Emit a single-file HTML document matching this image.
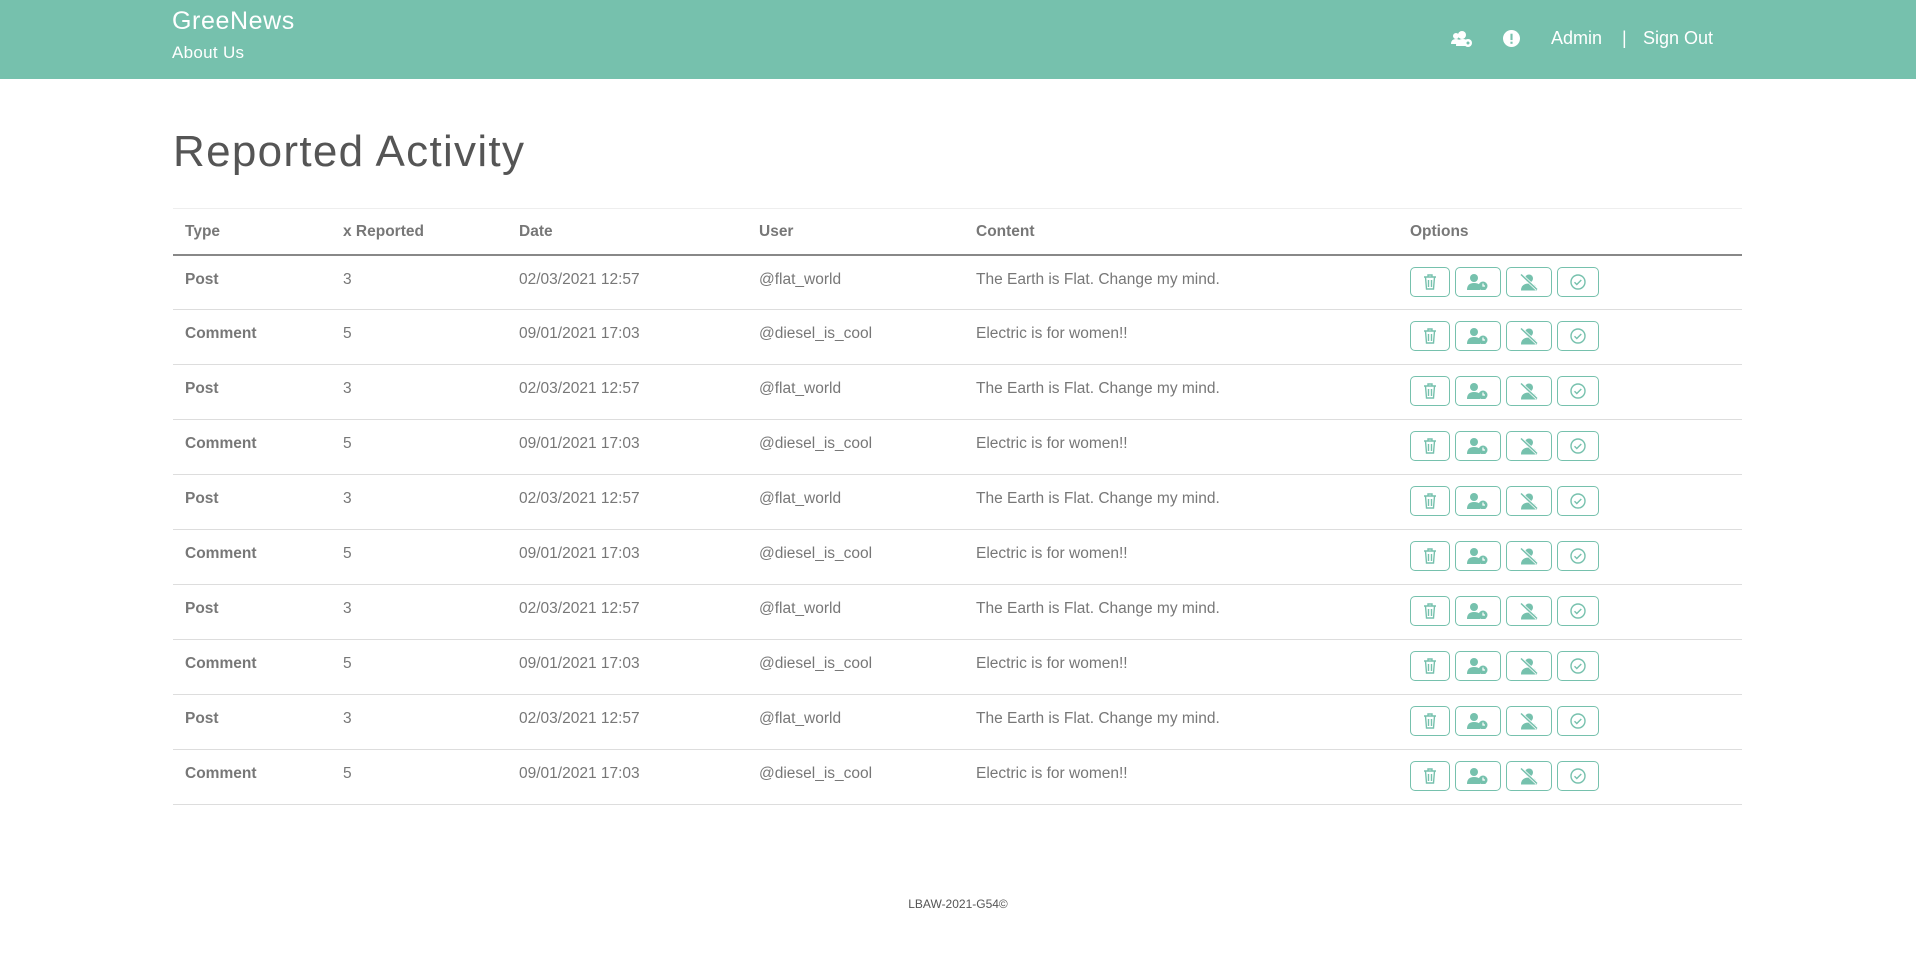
<!DOCTYPE html>
<html><head><meta charset="utf-8"><style>
*{box-sizing:border-box;margin:0;padding:0}
body{width:1916px;height:969px;background:#fff;font-family:"Liberation Sans",sans-serif;color:#777;overflow:hidden;position:relative}
.nav{position:absolute;left:0;top:0;width:1916px;height:79px;background:#76c1ad;color:#fff}
.brand{position:absolute;left:172px;top:7px;font-size:25px;letter-spacing:0.6px}
.about{position:absolute;left:172px;top:43px;font-size:17px;letter-spacing:0.3px}
.right{position:absolute;top:28px;font-size:18px}
h1{position:absolute;left:173px;top:127px;font-size:44px;font-weight:normal;color:#555;letter-spacing:1.3px}
table{position:absolute;left:173px;top:208px;width:1569px;border-collapse:collapse;font-size:15.5px;border-top:1px solid #eee}
th{text-align:left;font-weight:bold;color:#777;height:46px;border-bottom:2px solid #888;padding-left:12px;padding-top:2px}
td{height:55px;border-bottom:1px solid #ddd;padding-left:12px;vertical-align:top;padding-top:15px}
td.b{font-weight:bold}
.btn{display:inline-block;height:30px;border:1.5px solid #76c1ad;border-radius:5px;margin-right:5px;vertical-align:top;position:relative;margin-top:-4px}
.btn svg{position:absolute;left:50%;top:50%;transform:translate(-50%,-50%)}
.foot{position:absolute;left:0;width:1916px;top:897px;text-align:center;font-size:12px;color:#555}
</style></head><body>
<div class="nav">
<div class="brand">GreeNews</div>
<div class="about">About Us</div>
<svg class="right" style="left:1451px;top:31px" width="22" height="16" viewBox="0 0 22 16" fill="#fff"><circle cx="5" cy="5" r="3"/><circle cx="11" cy="4" r="4"/><path d="M0 13q0-5 5-5 5 0 5 5z"/><path d="M5 15q0-7 7-7 4 0 5 3v4z"/><circle cx="17" cy="12" r="4"/><circle cx="17" cy="12" r="1.5" fill="#76c1ad"/></svg>
<svg class="right" style="left:1503px;top:30px" width="17" height="17" viewBox="0 0 16 16"><circle cx="8" cy="8" r="8" fill="#fff"/><rect x="7" y="3.5" width="2" height="6" fill="#76c1ad"/><rect x="7" y="11" width="2" height="2" fill="#76c1ad"/></svg>
<div class="right" style="left:1551px">Admin</div>
<div class="right" style="left:1622px">|</div>
<div class="right" style="left:1643px">Sign Out</div>
</div>
<h1>Reported Activity</h1>
<table>
<colgroup><col style="width:158px"><col style="width:176px"><col style="width:240px"><col style="width:217px"><col style="width:434px"><col></colgroup>
<tr><th>Type</th><th>x Reported</th><th>Date</th><th>User</th><th>Content</th><th>Options</th></tr>
<tbody id="tb"></tbody>
</table>
<div class="foot">LBAW-2021-G54©</div>
<script>
var c='#76c1ad';
var btns='<span class="btn" style="width:40px"><svg width="14" height="16" viewBox="0 0 14 16" fill="none" stroke="'+c+'" stroke-width="1.4"><path d="M1 3h12M5 3V1h4v2M2.5 3l1 12h7l1-12M5.5 6v7M8.5 6v7"/></svg></span>'+
'<span class="btn" style="width:46px"><svg width="22" height="16" viewBox="0 0 22 16" fill="'+c+'"><circle cx="7" cy="4" r="4"/><path d="M0 16q0-7 7-7 4 0 6 2v5z"/><circle cx="16" cy="12" r="4.5"/><path d="M16 9.5v2.5h2" stroke="#fff" stroke-width="1.2" fill="none"/></svg></span>'+
'<span class="btn" style="width:46px"><svg width="22" height="17" viewBox="0 0 22 17" fill="'+c+'"><circle cx="11" cy="5" r="4"/><path d="M3 17q0-7 8-7 8 0 8 7z"/><path d="M3 1l16 15" stroke="#fff" stroke-width="3"/><path d="M3 1l16 15" stroke="'+c+'" stroke-width="1.5"/></svg></span>'+
'<span class="btn" style="width:42px"><svg width="16" height="16" viewBox="0 0 16 16" fill="none" stroke="'+c+'" stroke-width="1.4"><circle cx="8" cy="8" r="7"/><path d="M4.5 8.2l2.3 2.3 4.5-4.5"/></svg></span>';
var h='';
for(var i=0;i<10;i++){
 if(i%2==0)h+='<tr><td class="b">Post</td><td>3</td><td>02/03/2021 12:57</td><td>@flat_world</td><td>The Earth is Flat. Change my mind.</td><td>'+btns+'</td></tr>';
 else h+='<tr><td class="b">Comment</td><td>5</td><td>09/01/2021 17:03</td><td>@diesel_is_cool</td><td>Electric is for women!!</td><td>'+btns+'</td></tr>';
}
document.getElementById('tb').innerHTML=h;
</script>
</body></html>
